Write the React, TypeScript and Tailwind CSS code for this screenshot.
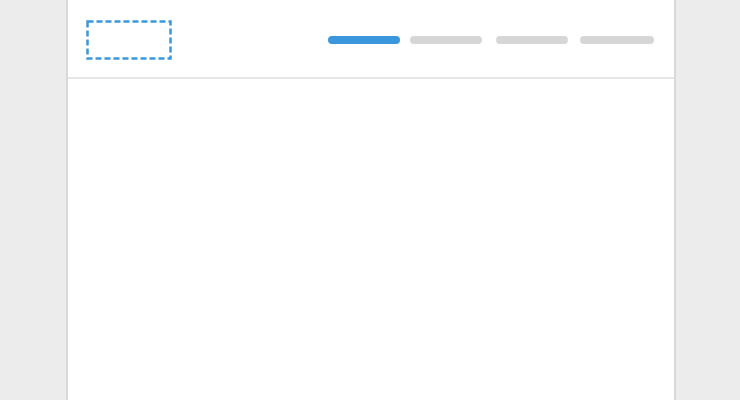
function LogoPlaceholder() {
  return (
    <svg width="86" height="40" viewBox="0 0 86 40" className="mt-[20px] block shrink-0">
      <rect
        x="1.5"
        y="1.5"
        width="83"
        height="37"
        fill="none"
        stroke="#3b97dd"
        strokeWidth="2.5"
        strokeDasharray="6 3"
      />
    </svg>
  );
}

export default function App() {
  return (
    <div className="flex h-[400px] w-[740px] overflow-hidden bg-[#ececec]">
      <div className="ml-[66px] flex h-full w-[610px] flex-col border-x-2 border-[#d9d9d9] bg-white">
        <header className="flex h-[79px] shrink-0 items-start border-b-2 border-[#e6e6e6] pl-[18px] pr-[20px]">
          <LogoPlaceholder />
          <nav className="ml-auto mt-[36px] flex">
            <span className="h-[8px] w-[72px] rounded-full bg-[#3b97dd]" />
            <span className="ml-[10px] h-[8px] w-[72px] rounded-full bg-[#d6d6d6]" />
            <span className="ml-[14px] h-[8px] w-[72px] rounded-full bg-[#d6d6d6]" />
            <span className="ml-[12px] h-[8px] w-[74px] rounded-full bg-[#d6d6d6]" />
          </nav>
        </header>
        <main className="flex-1" />
      </div>
    </div>
  );
}
